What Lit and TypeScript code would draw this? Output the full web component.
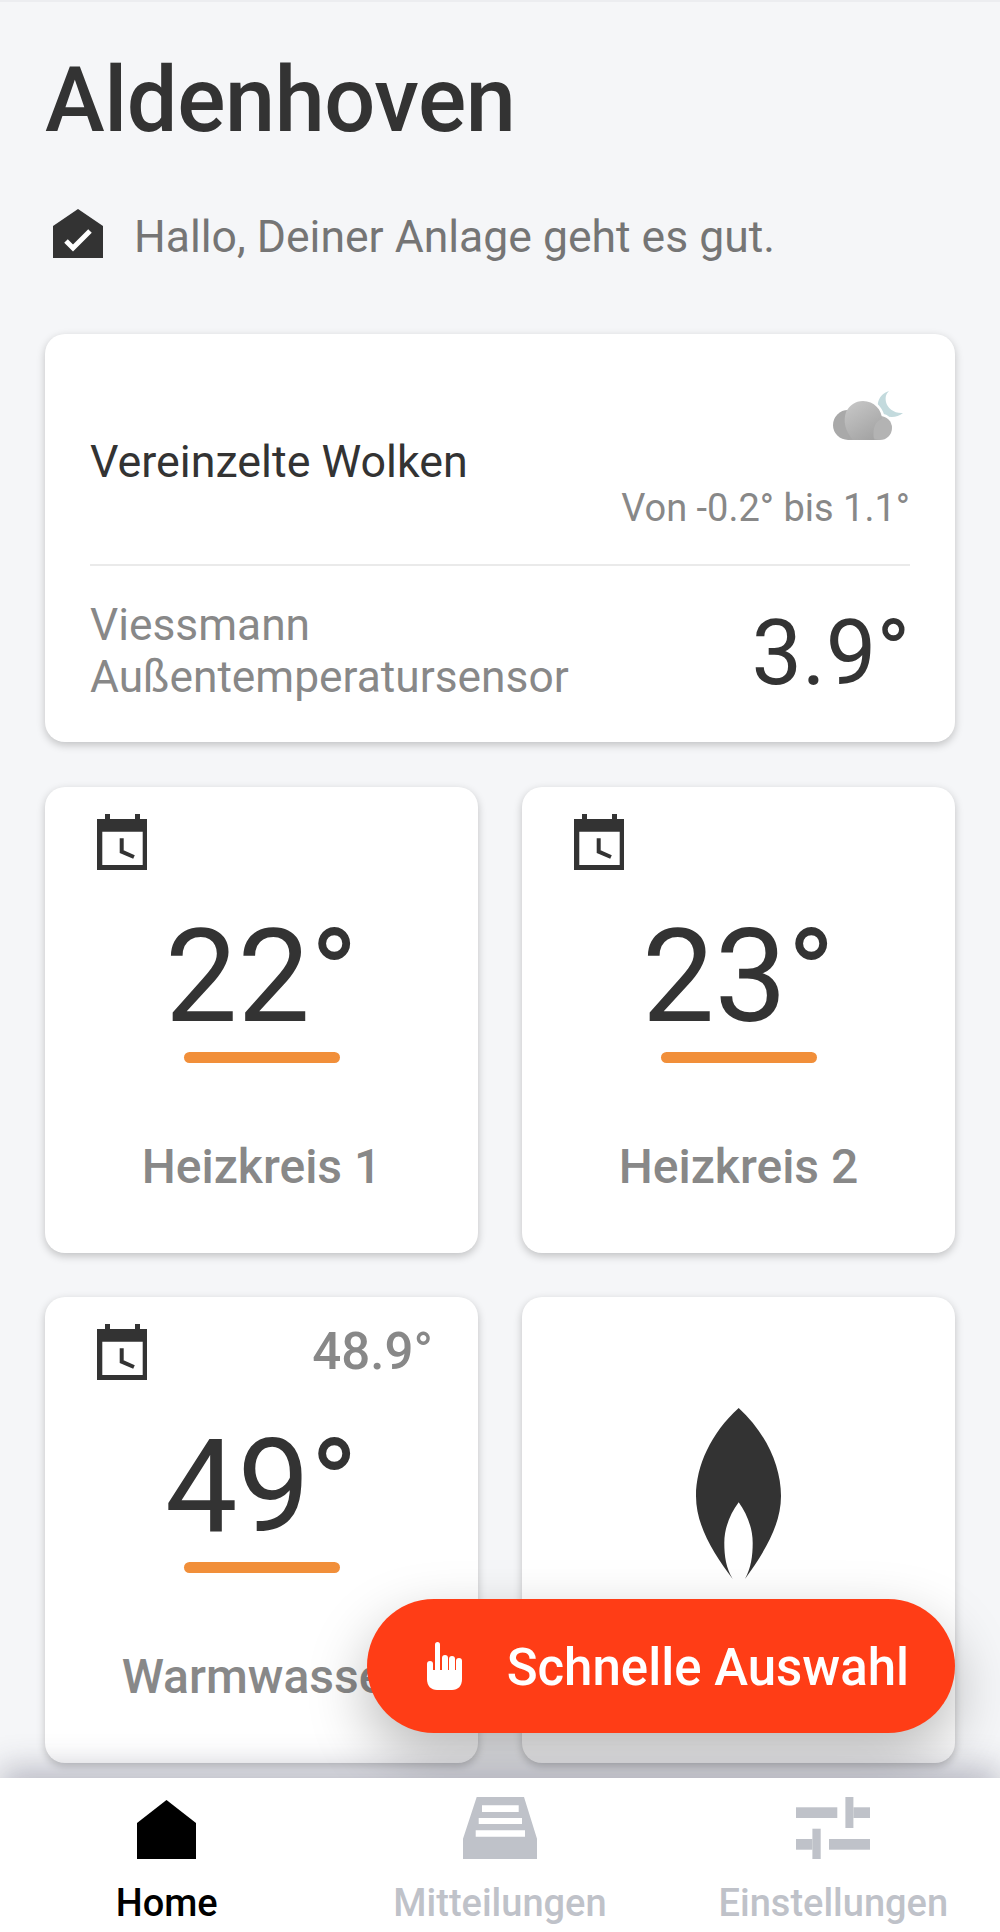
import { LitElement, html, css, svg } from 'lit';
import { customElement } from 'lit/decorators.js';

const calendarIcon = svg`<path d="M0 5H8V0H13V5H38V0H43V5H50V56H0ZM5.300 17.700V51H45.700V17.700Z" fill="#333" fill-rule="evenodd"/><path d="M24.700 24.300V37.700L37 43" fill="none" stroke="#333" stroke-width="4"/>`;

interface Tile {
  temp: string;
  label: string;
  current?: string;
}

const tiles: Tile[] = [
  { temp: '22°', label: 'Heizkreis 1' },
  { temp: '23°', label: 'Heizkreis 2' },
  { temp: '49°', label: 'Warmwasser', current: '48.9°' },
];

@customElement('app-root')
export class AppRoot extends LitElement {
  static styles = css`
    :host {
      display: flex;
      flex-direction: column;
      position: relative;
      width: 1000px;
      height: 1932px;
      overflow: hidden;
      background: #f5f6f8;
      font-family: Roboto, sans-serif;
      color: #333;
    }

    main {
      flex: 1;
      min-height: 0;
      padding: 0 45px;
      border-top: 2px solid #ecedf0;
    }

    h1 {
      margin: 0;
      padding-top: 44px;
      font-size: 90px;
      line-height: 110px;
      font-weight: 500;
      letter-spacing: -0.4px;
    }

    .status {
      display: flex;
      align-items: center;
      gap: 31px;
      margin-top: 53px;
      padding-left: 8px;
      font-size: 44.5px;
      line-height: 50px;
      color: #757575;
    }

    .status svg {
      display: block;
    }

    .status span {
      padding-top: 3px;
      margin-bottom: -3px;
    }

    .card {
      background: #fff;
      border-radius: 20px;
      box-shadow: 0 3px 8px rgba(0, 0, 0, 0.22);
    }

    .weather {
      margin-top: 75px;
      padding: 57px 45px 38px;
    }

    .weather-top {
      display: flex;
      justify-content: space-between;
      align-items: center;
      padding-bottom: 34px;
      border-bottom: 2px solid #eaeaea;
    }

    .condition {
      padding-top: 3px;
      font-size: 44.8px;
      line-height: 50px;
    }

    .forecast {
      display: flex;
      flex-direction: column;
      align-items: flex-end;
      gap: 46px;
      font-size: 38px;
      line-height: 44px;
      color: #888;
    }

    .forecast svg {
      display: block;
      margin-right: 7px;
    }

    .weather-bottom {
      display: flex;
      justify-content: space-between;
      align-items: flex-start;
      padding-top: 33px;
    }

    .sensor {
      font-size: 44.3px;
      line-height: 52px;
      color: #888;
    }

    .outside {
      margin-top: 5px;
      font-size: 90px;
      line-height: 100px;
    }

    .tiles {
      display: grid;
      grid-template-columns: 433px 433px;
      grid-auto-rows: 466px;
      gap: 44px;
      margin-top: 45px;
    }

    .tile {
      display: flex;
      flex-direction: column;
      align-items: center;
    }

    .tile-head {
      display: flex;
      justify-content: space-between;
      align-self: stretch;
      padding: 27px 45px 0 52px;
      height: 56px;
    }

    .current {
      font-size: 51px;
      line-height: 56px;
      font-weight: 500;
      color: #888;
    }

    .temp {
      margin-top: 42px;
      font-size: 129px;
      line-height: 130px;
    }

    .bar {
      width: 156px;
      height: 11px;
      margin-top: 10px;
      border-radius: 6px;
      background: #f18f3a;
    }

    .label {
      margin-top: 79px;
      font-size: 48px;
      line-height: 50px;
      font-weight: 500;
      color: #888;
    }

    .flame {
      display: block;
      margin-top: 111px;
    }

    .fab {
      position: absolute;
      right: 45px;
      bottom: 199px;
      display: flex;
      align-items: center;
      gap: 45px;
      height: 134px;
      padding: 0 46px 0 60px;
      border-radius: 67px;
      background: #ff3d16;
      color: #fff;
      font-size: 51px;
      font-weight: 500;
      box-shadow: 0 24px 60px rgba(0, 0, 0, 0.28);
    }

    .fab span {
      padding-top: 3px;
    }

    nav {
      position: relative;
      display: grid;
      grid-template-columns: repeat(3, 1fr);
      height: 154px;
      background: #fff;
      box-shadow: 0 -10px 30px rgba(50, 50, 80, 0.3);
    }

    .tab {
      display: flex;
      flex-direction: column;
      align-items: center;
      padding-top: 19px;
      font-size: 38px;
      line-height: 40px;
      font-weight: 500;
      color: #bfc2c9;
    }

    .tab.active {
      color: #000;
    }

    .tab svg {
      display: block;
    }

    .tab span {
      margin-top: 24px;
    }
  `;

  render() {
    return html`
      <main>
        <h1>Aldenhoven</h1>
        <div class="status">
          <svg width="50" height="50" viewBox="0 0 50 50">
            <path d="M25 0L50 17V49H0V17Z" fill="#333" />
            <path d="M13 32L20 39L37 22" fill="none" stroke="#fff" stroke-width="5" />
          </svg>
          <span>Hallo, Deiner Anlage geht es gut.</span>
        </div>

        <section class="card weather">
          <div class="weather-top">
            <div class="condition">Vereinzelte Wolken</div>
            <div class="forecast">
              ${this._weatherIcon()}
              <div>Von -0.2° bis 1.1°</div>
            </div>
          </div>
          <div class="weather-bottom">
            <div class="sensor">Viessmann<br />Außentemperatursensor</div>
            <div class="outside">3.9°</div>
          </div>
        </section>

        <section class="tiles">
          ${tiles.map(
            (t) => html`
              <div class="card tile">
                <div class="tile-head">
                  <svg width="50" height="56" viewBox="0 0 50 56">${calendarIcon}</svg>
                  ${t.current ? html`<div class="current">${t.current}</div>` : ''}
                </div>
                <div class="temp">${t.temp}</div>
                <div class="bar"></div>
                <div class="label">${t.label}</div>
              </div>
            `
          )}
          <div class="card tile">
            <svg class="flame" width="85" height="171" viewBox="0 0 85 171">
              <path
                d="M42.700 0C15 25 0 58 0 88C0 118 18 146 36.700 171C30 160 28.300 148 28.300 135C28.300 120 34 106 42.700 94.300C51 106 56.700 120 56.700 135C56.700 148 55 160 49 171C67 146 85 118 85 88C85 58 70 25 42.700 0Z"
                fill="#333"
              />
            </svg>
          </div>
        </section>
      </main>

      <div class="fab">
        <svg width="35" height="48" viewBox="0 0 35 48" fill="#fff">
          <rect x="8" y="0" width="5" height="32" rx="2.500" />
          <rect x="15" y="13" width="6" height="20" rx="3" />
          <rect x="22" y="14" width="6" height="20" rx="3" />
          <rect x="29" y="16" width="6" height="20" rx="3" />
          <rect x="0" y="19" width="6" height="20" rx="3" />
          <path d="M0 28H35V37C35 44 31 48 25 48H10C4 48 0 44 0 37Z" />
        </svg>
        <span>Schnelle Auswahl</span>
      </div>

      <nav>
        <div class="tab active">
          <svg width="59" height="62" viewBox="0 0 59 62">
            <path d="M29.500 3L59 26V62H0V26Z" fill="#000" />
          </svg>
          <span>Home</span>
        </div>
        <div class="tab">
          <svg width="74" height="62" viewBox="0 0 74 62">
            <path
              d="M13.700 0H61L74 41.700V62H0V41.700ZM19 8.300V15H55.700V8.300ZM15.700 21V27H59V21ZM12.700 33.300V39.700H62V33.300Z"
              fill="#bfc2c9"
              fill-rule="evenodd"
            />
          </svg>
          <span>Mitteilungen</span>
        </div>
        <div class="tab">
          <svg width="74" height="62" viewBox="0 0 74 62" fill="#bfc2c9">
            <rect x="0" y="10.300" width="41.300" height="10.700" />
            <rect x="49.400" y="0" width="8" height="31" />
            <rect x="57.400" y="10.300" width="16.600" height="10.700" />
            <rect x="0" y="42" width="16.400" height="10.700" />
            <rect x="16.400" y="31.700" width="8.300" height="30.300" />
            <rect x="33" y="42" width="41" height="10.700" />
          </svg>
          <span>Einstellungen</span>
        </div>
      </nav>
    `;
  }

  _weatherIcon() {
    return html`
      <svg width="70" height="49" viewBox="0 0 70 49">
        <defs>
          <linearGradient id="cloudMain" x1="0.2" y1="0" x2="0.8" y2="1">
            <stop offset="0" stop-color="#c6c6c6" />
            <stop offset="1" stop-color="#a2a2a2" />
          </linearGradient>
        </defs>
        <path
          d="M56 0C46 3 42 14 47 21C52 27 63 28 70 22C62 23 54 17 53 11C52 6 53 3 56 0Z"
          fill="#c3dadd"
        />
        <path
          d="M12 49C4 49 -3 43 -3 34C-3 26 4 19 12 19C15 15 22 8 30 9C38 9 46 16 49 25C54 25 59 31 59 37C59 44 54 49 47 49Z"
          transform="translate(3 0) scale(0.95 1)"
          fill="#fff"
          stroke="#fff"
          stroke-width="4"
        />
        <circle cx="15" cy="34" r="15" fill="#a9a9a9" />
        <rect x="15" y="34" width="32" height="15" fill="#a8a8a8" />
        <circle cx="47" cy="37" r="12" fill="#b3b3b3" />
        <path d="M13 21C17 14 22 10 30 10C41 10 49 19 49 28C43 30 39 36 41 49H20C12 40 10 30 13 21Z" fill="url(#cloudMain)" />
      </svg>
    `;
  }
}
